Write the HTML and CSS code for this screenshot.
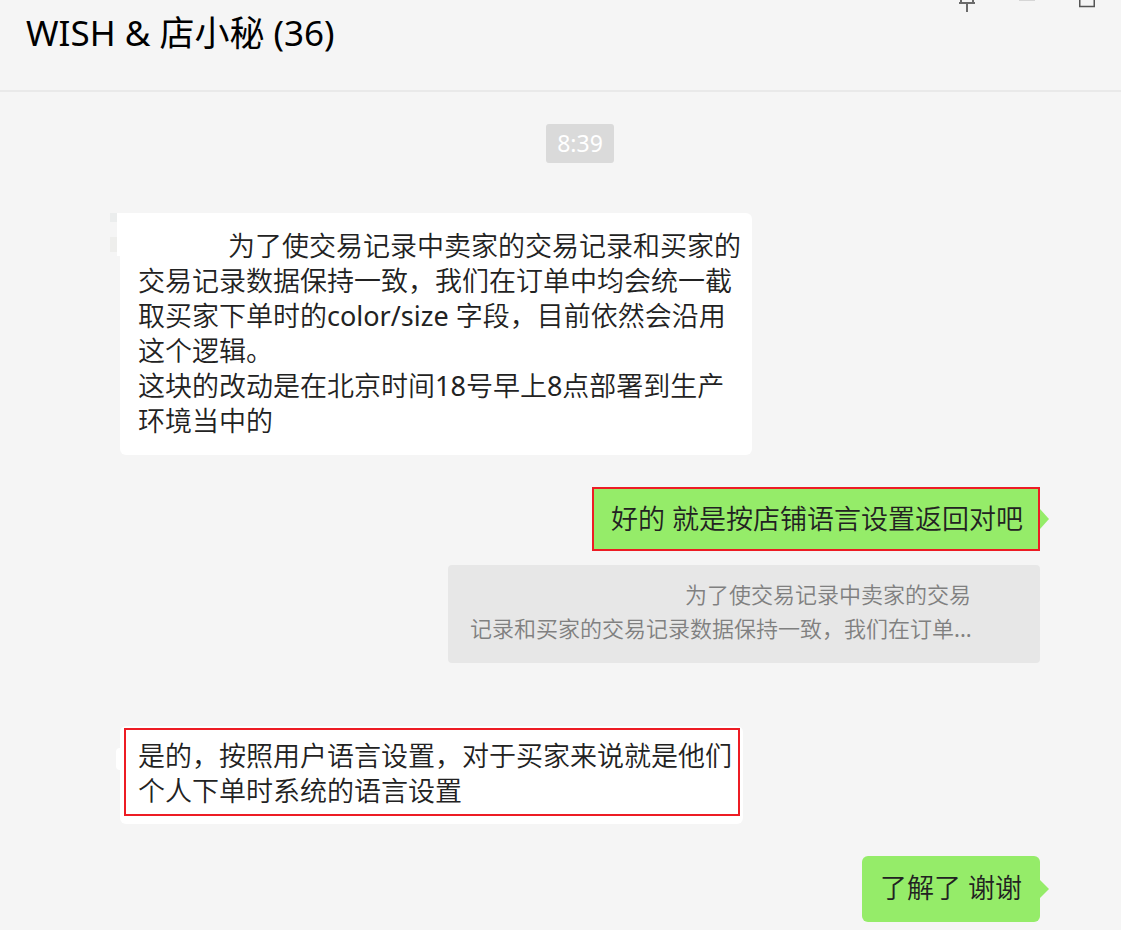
FILE: index.html
```
<!DOCTYPE html>
<html lang="zh-CN">
<head>
    <meta charset="UTF-8">
    <meta name="viewport" content="width=device-width, initial-scale=1.0">
    <title>WISH &amp; 店小秘 (36)</title>
    <link rel="stylesheet" href="styles.css">
</head>
<body>
    <header class="header">
        <h1>WISH &amp; 店小秘 (36)</h1>
        <div class="controls">
            <button type="button" aria-label="置顶">
                <svg width="16" height="12" viewBox="0 0 16 12" fill="none" stroke="#6b6b6b" stroke-width="2">
                    <path d="M2 0V3M14 0V3M0 3H16M8 3V12"/>
                </svg>
            </button>
            <button type="button" aria-label="最小化">
                <svg width="16" height="12" viewBox="0 0 16 12">
                    <path d="M0 0H16V1H0z" fill="#d6d6d6"/>
                </svg>
            </button>
            <button type="button" aria-label="最大化">
                <svg width="16" height="12" viewBox="0 0 16 12" fill="none" stroke="#555" stroke-width="1.5">
                    <path d="M.75 0V6.5H15.25V0"/>
                </svg>
            </button>
        </div>
    </header>

    <main class="chat">
        <time class="time">8:39</time>

        <div class="message left">
            <p class="bubble first">为了使交易记录中卖家的交易记录和买家的交易记录数据保持一致，我们在订单中均会统一截取买家下单时的color/size 字段，目前依然会沿用这个逻辑。<br>这块的改动是在北京时间18号早上8点部署到生产环境当中的</p>
        </div>

        <div class="message right">
            <p class="bubble green marked">好的 就是按店铺语言设置返回对吧</p>
            <blockquote class="quote">为了使交易记录中卖家的交易<br>记录和买家的交易记录数据保持一致，我们在订单...</blockquote>
        </div>

        <div class="message left reply">
            <div class="bubble framed">
                <p class="frame">是的，按照用户语言设置，对于买家来说就是他们<br>个人下单时系统的语言设置</p>
            </div>
        </div>

        <div class="message right">
            <p class="bubble green">了解了 谢谢</p>
        </div>
    </main>
</body>
</html>
```
FILE: styles.css
```
* {
    box-sizing: border-box;
}
body {
    font-family: "Noto Sans", "Noto Sans CJK SC", sans-serif;
    margin: 0;
    background-color: #f5f5f5;
    color: #222;
}
h1, p, blockquote {
    margin: 0;
}
.header {
    display: flex;
    justify-content: space-between;
    align-items: flex-start;
    padding: 0 26px;
    height: 92px;
    border-bottom: 2px solid #e9e9e9;
}
.header h1 {
    font-size: 35px;
    font-weight: 400;
    line-height: 66px;
    color: #000;
}
.controls {
    display: flex;
    gap: 44px;
}
.controls button {
    display: flex;
    padding: 0;
    border: 0;
    background: none;
}
.chat {
    display: flex;
    flex-direction: column;
    padding: 32px 81px 8px 120px;
}
.time {
    align-self: center;
    padding: 0 11px;
    border-radius: 3px;
    background-color: #dadada;
    color: #fff;
    font-size: 23px;
    line-height: 39px;
}
.message {
    display: flex;
    flex-direction: column;
    margin-top: 32px;
}
.left {
    align-items: flex-start;
}
.right {
    align-items: flex-end;
}
.time + .message {
    margin-top: 50px;
}
.bubble, .quote {
    font-family: "Noto Sans", "Noto Sans CJK SC DemiLight", "Noto Sans CJK SC", sans-serif;
}
.bubble {
    position: relative;
    max-width: 632px;
    padding: 15px 11px 17px 18px;
    border-radius: 6px;
    background-color: #fff;
    font-size: 27px;
    line-height: 35px;
}
.first {
    text-indent: 90px;
}
/* blank patch over the avatar edge */
.first::before {
    content: "";
    position: absolute;
    left: -3px;
    top: 0;
    width: 20px;
    height: 43px;
    background-color: #fff;
}
.first::after {
    content: "";
    position: absolute;
    left: -10px;
    top: 0;
    width: 7px;
    height: 39px;
    background: linear-gradient(#ebeded 9px, transparent 9px 24px, #eeeeec 24px);
}
.green {
    padding: 14px 18px 17px;
    background-color: #95ec69;
}
.green::after {
    content: "";
    position: absolute;
    right: -9px;
    top: 50%;
    margin-top: -10px;
    border-left: 10px solid #95ec69;
    border-top: 10px solid transparent;
    border-bottom: 10px solid transparent;
}
.marked {
    padding: 12px 15px 13px 17px;
    border: 2px solid #ed1c24;
    border-radius: 0;
}
.marked::after {
    right: -11px;
    border-left-width: 9px;
}
.quote {
    width: 592px;
    max-width: 100%;
    margin-top: 14px;
    padding: 12px 22px 18px;
    border-radius: 4px;
    background-color: #e7e7e7;
    color: #808080;
    font-size: 22px;
    line-height: 34px;
    text-indent: 215px;
}
.reply {
    margin-top: 63px;
}
.framed {
    padding: 2px 3px 8px 4px;
}
.framed::before {
    content: "";
    position: absolute;
    left: -4px;
    top: 22px;
    width: 8px;
    height: 22px;
    border-radius: 4px;
    background-color: #fff;
}
.frame {
    padding: 8px 6px 6px 12px;
    border: 2px solid #ed1c24;
}
```
